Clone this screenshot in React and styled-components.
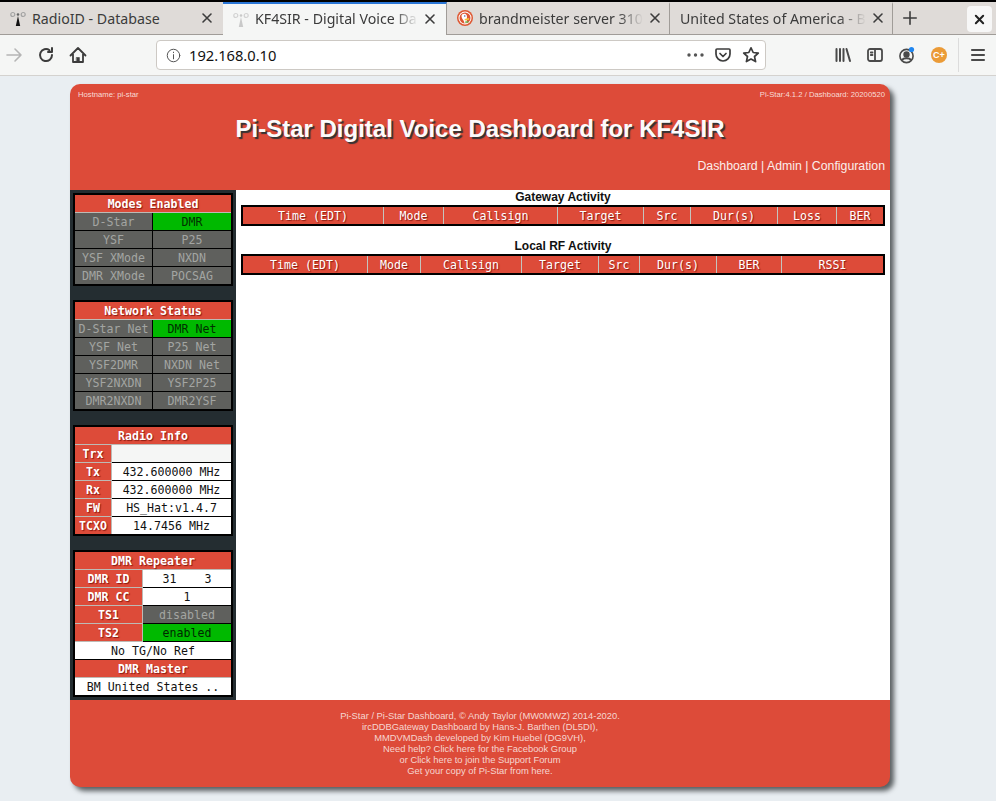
import styled, { createGlobalStyle } from 'styled-components';

const GlobalStyle = createGlobalStyle`
  html, body {
    margin: 0;
    padding: 0;
    background: #e9eef2;
    overflow: hidden;
  }
`;

const RED = '#dd4b39';
const mono = '"DejaVu Sans Mono", monospace';
const sans = '"Liberation Sans", Arial, sans-serif';
const uiFont = '"Noto Sans", "Open Sans", sans-serif';

const gatewayCols = [
  ['Time (EDT)', 141],
  ['Mode', 60],
  ['Callsign', 114],
  ['Target', 86],
  ['Src', 47],
  ['Dur(s)', 87],
  ['Loss', 59],
  ['BER', 46],
];

const localCols = [
  ['Time (EDT)', 125],
  ['Mode', 53],
  ['Callsign', 101],
  ['Target', 77],
  ['Src', 41],
  ['Dur(s)', 77],
  ['BER', 65],
  ['RSSI', 101],
];

const modes = [
  ['D-Star', 'off'],
  ['DMR', 'on'],
  ['YSF', 'off'],
  ['P25', 'off'],
  ['YSF XMode', 'off'],
  ['NXDN', 'off'],
  ['DMR XMode', 'off'],
  ['POCSAG', 'off'],
];

const network = [
  ['D-Star Net', 'off'],
  ['DMR Net', 'on'],
  ['YSF Net', 'off'],
  ['P25 Net', 'off'],
  ['YSF2DMR', 'off'],
  ['NXDN Net', 'off'],
  ['YSF2NXDN', 'off'],
  ['YSF2P25', 'off'],
  ['DMR2NXDN', 'off'],
  ['DMR2YSF', 'off'],
];

const Page = styled.div`
  width: 996px;
  height: 801px;
  overflow: hidden;
  background: #e9eef2;
  display: flex;
  flex-direction: column;
`;

const TabStrip = styled.div`
  height: 32px;
  flex-shrink: 0;
  border-top: 2px solid #000;
  background: #dfdbd8;
  border-bottom: 1px solid #a09c98;
  display: flex;
  position: relative;
  font-family: ${uiFont};
  font-size: 14.2px;
  color: #3b3b3b;
`;

const Tab = styled.div`
  width: ${({ $width }) => $width}px;
  height: ${({ $active }) => ($active ? 33 : 32)}px;
  box-sizing: border-box;
  display: flex;
  align-items: center;
  padding: 0 10px 2px 10px;
  gap: 6px;
  background: ${({ $active }) => ($active ? '#f5f6f5' : 'transparent')};
  border-top: 2px solid ${({ $active }) => ($active ? '#2a76d6' : 'transparent')};
  border-right: 1px solid #a09c98;
  margin-left: ${({ $active }) => ($active ? -1 : 0)}px;
`;

const TabTitle = styled.span`
  flex: 1;
  white-space: nowrap;
  ${({ $faded }) =>
    $faded &&
    `
    -webkit-mask-image: linear-gradient(to right, #000 85%, transparent 100%);
    mask-image: linear-gradient(to right, #000 85%, transparent 100%);
  `}
`;

const NewTab = styled.div`
  width: 34px;
  display: flex;
  align-items: center;
  justify-content: center;
`;

const WindowClose = styled.div`
  position: absolute;
  left: 967px;
  top: 4px;
  width: 25px;
  height: 26px;
  background: #f7f7f7;
  border-radius: 4px;
  display: flex;
  align-items: center;
  justify-content: center;
`;

const Toolbar = styled.div`
  height: 40px;
  flex-shrink: 0;
  background: #f5f6f5;
  border-bottom: 1px solid #d4d2cf;
  display: flex;
  align-items: center;
  position: relative;
`;

const NavIcons = styled.div`
  width: 156px;
  padding-left: 5px;
  box-sizing: border-box;
  display: flex;
  align-items: center;
  gap: 14px;
`;

const UrlBar = styled.div`
  width: 610px;
  height: 30px;
  box-sizing: border-box;
  background: #fff;
  border: 1px solid #cdc9c4;
  border-radius: 4px;
  display: flex;
  align-items: center;
  padding: 0 5px 0 9px;
  font-family: ${uiFont};
  font-size: 14.7px;
  color: #111;
  gap: 8px;
`;

const UrlText = styled.span`
  flex: 1;
`;

const UrlActions = styled.div`
  display: flex;
  align-items: center;
  gap: 10px;
`;

const RightIcons = styled.div`
  margin-left: 68px;
  display: flex;
  align-items: center;
  gap: 14px;
`;

const Separator = styled.div`
  width: 1px;
  height: 34px;
  background: #dcdcdc;
  margin: 0 -4px 0 -3px;
`;

const Orb = styled.div`
  width: 16px;
  height: 16px;
  margin-left: 1px;
  border-radius: 50%;
  background: #eb9b37;
  color: #fff;
  font-family: ${sans};
  font-weight: bold;
  font-size: 9px;
  display: flex;
  align-items: center;
  justify-content: center;
`;

const Dashboard = styled.div`
  width: 820px;
  margin: 8px 0 0 70px;
  flex-shrink: 0;
  border-radius: 10px;
  background: ${RED};
  box-shadow: 4px 4px 5px #5a5f62;
  overflow: hidden;
`;

const Header = styled.header`
  height: 106px;
  box-sizing: border-box;
  padding: 6px 5px 0 8px;
  color: #fff;
  font-family: ${sans};
  position: relative;
`;

const HeaderMeta = styled.div`
  display: flex;
  justify-content: space-between;
  font-size: 7.7px;
  line-height: 10px;
  color: #f8dcd7;
`;

const Title = styled.h1`
  margin: 15px 3px 0 0;
  font-size: 24px;
  line-height: 28px;
  font-weight: bold;
  text-align: center;
  color: #fbfbfb;
  text-shadow: 2px 2px 1px #333;
`;

const HeaderNav = styled.nav`
  margin-top: 16px;
  text-align: right;
  font-size: 12.3px;
  line-height: 14px;
  color: #fbeeeb;
`;

const Body = styled.div`
  display: flex;
  height: 510px;
  background: #fff;
`;

const Sidebar = styled.aside`
  width: 166px;
  box-sizing: border-box;
  background: #242d31;
  padding: 3px 3px 0;
  display: flex;
  flex-direction: column;
  gap: 14px;
`;

const Panel = styled.div`
  border: 2px solid #000;
  background: #000;
  font-family: ${mono};
  font-size: 11.6px;
  line-height: 19px;
  text-align: center;
  width: 160px;
  box-sizing: border-box;
`;

const PanelHead = styled.div`
  height: 18px;
  box-sizing: border-box;
  background: ${RED};
  color: #fff;
  font-weight: bold;
  text-shadow: 1px 1px 1px #8b1a10;
  border-bottom: 1px solid #bdbab5;
`;

const StatusGrid = styled.div`
  display: grid;
  grid-template-columns: 77px 78px;
  gap: 1px;
`;

const Status = styled.div`
  height: 17px;
  white-space: nowrap;
  background: ${({ $state }) => ($state === 'on' ? '#00b900' : '#5f605d')};
  color: ${({ $state }) => ($state === 'on' ? '#003200' : '#a3a5a2')};
`;

const InfoRow = styled.div`
  display: grid;
  grid-template-columns: ${({ $label }) => $label}px 1fr;
  height: 18px;
  overflow: hidden;
  &:last-child {
    height: 17px;
  }
`;

const InfoLabel = styled.div`
  height: 18px;
  box-sizing: border-box;
  background: ${RED};
  color: #fff;
  font-weight: bold;
  text-shadow: 1px 1px 1px #8b1a10;
  border-right: 1px solid #bdbab5;
  border-bottom: 1px solid #bdbab5;
  white-space: nowrap;
`;

const InfoValue = styled.div`
  background: ${({ $bg }) => $bg || '#fff'};
  color: ${({ $color }) => $color || '#111'};
  border-bottom: 1px solid #000;
  white-space: pre;
  box-sizing: border-box;
  height: 18px;
`;

const WideValue = styled.div`
  height: 18px;
  background: #fff;
  color: #111;
  border-bottom: 1px solid #000;
  box-sizing: border-box;
  white-space: nowrap;
  &:last-child {
    height: 17px;
    border-bottom: 0;
  }
`;

const Content = styled.main`
  flex: 1;
  padding: 0 5px;
`;

const SectionTitle = styled.div`
  font-family: ${sans};
  font-size: 12px;
  font-weight: bold;
  line-height: 14px;
  margin-bottom: 1px;
  text-align: center;
  color: #111;
`;

const ActivityTable = styled.div`
  border: 2px solid #000;
  display: flex;
  width: 644px;
  box-sizing: border-box;
  margin-bottom: 13px;
`;

const ActivityHead = styled.div`
  width: ${({ $width }) => $width}px;
  height: 17px;
  box-sizing: border-box;
  background: ${RED};
  color: #fff;
  font-family: ${mono};
  font-size: 11.6px;
  line-height: 19px;
  text-align: center;
  text-shadow: 1px 1px 1px #8b1a10;
  border-right: 1px solid #c4c4be;
  &:last-child {
    border-right: 0;
  }
`;

const Footer = styled.footer`
  height: 87px;
  box-sizing: border-box;
  padding-top: 10px;
  font-family: ${sans};
  font-size: 9.4px;
  line-height: 11px;
  text-align: center;
  color: #f6d6d0;
`;

const Stroke = ({ size = 18, color = '#3c3c3c', width = 2, children }) => (
  <svg
    width={size}
    height={size}
    viewBox="0 0 18 18"
    fill="none"
    stroke={color}
    strokeWidth={width}
    strokeLinecap="round"
    strokeLinejoin="round"
  >
    {children}
  </svg>
);

const CloseIcon = ({ size = 12, width = 1.6, color = '#3c3c3c' }) => (
  <svg width={size} height={size} viewBox="0 0 12 12" stroke={color} strokeWidth={width} strokeLinecap="round" style={{ flexShrink: 0 }}>
    <path d="M2 2 L10 10 M10 2 L2 10" />
  </svg>
);

const AntennaIcon = ({ faded }) => (
  <svg width="16" height="16" viewBox="0 0 16 16" fill="none" style={{ flexShrink: 0 }}>
    <g stroke={faded ? '#d2d2d2' : '#a3a3a3'} strokeWidth="1.2">
      <circle cx="2.8" cy="4.5" r="2" />
      <circle cx="13.2" cy="4.5" r="2" />
    </g>
    <circle cx="8" cy="4.5" r="1.3" fill={faded ? '#c9c9c9' : '#666'} />
    <path d="M8 6 L10.2 16 H5.8 Z" fill={faded ? '#c9c9c9' : '#111'} />
  </svg>
);

const DuckIcon = () => (
  <svg width="16" height="16" viewBox="0 0 16 16" style={{ flexShrink: 0 }}>
    <circle cx="8" cy="8" r="8" fill="#de5833" />
    <circle cx="8" cy="8" r="6.5" fill="#fff" />
    <circle cx="8" cy="8" r="5.5" fill="#de5833" />
    <path d="M4.5 6 C4.5 3.5 9 2.8 9.8 5.5 C10.3 7.5 9.5 9 10 13.5 H7.5 C7.5 10.5 4.5 9 4.5 6 Z" fill="#fff" />
    <path d="M7.5 9 L12.2 8 L12 9.8 L8 10.5 Z" fill="#f5c33b" />
    <path d="M8 11.5 L11.5 11 L11.5 12.5 L8.5 13 Z" fill="#6bb04a" />
    <circle cx="7.8" cy="6" r="0.7" fill="#2d4f8e" />
  </svg>
);

const Chrome = () => (
  <>
    <TabStrip>
      <Tab $width={224}>
        <AntennaIcon />
        <TabTitle>RadioID - Database</TabTitle>
        <CloseIcon />
      </Tab>
      <Tab $width={224} $active>
        <AntennaIcon faded />
        <TabTitle $faded>KF4SIR - Digital Voice Da</TabTitle>
        <CloseIcon />
      </Tab>
      <Tab $width={223}>
        <DuckIcon />
        <TabTitle $faded>brandmeister server 310</TabTitle>
        <CloseIcon />
      </Tab>
      <Tab $width={223}>
        <TabTitle $faded>United States of America - B</TabTitle>
        <CloseIcon />
      </Tab>
      <NewTab>
        <Stroke size={16} width={1.8}>
          <path d="M9 2 V16 M2 9 H16" />
        </Stroke>
      </NewTab>
      <WindowClose>
        <CloseIcon size={11} width={2.2} color="#222" />
      </WindowClose>
    </TabStrip>
    <Toolbar>
      <NavIcons>
        <Stroke color="#b5b5b5" size={18} width={1.6}>
          <path d="M2 9 H16 M10 3 L16 9 L10 15" />
        </Stroke>
        <Stroke size={18}>
          <path d="M15 9 A6 6 0 1 1 12.5 4.2 M15 2 V6 H11" />
        </Stroke>
        <svg width="18" height="18" viewBox="0 0 18 18" fill="none" stroke="#3c3c3c" strokeWidth="1.8" strokeLinejoin="round" strokeLinecap="round">
          <path d="M1.5 9.5 L9 2 L16.5 9.5 M4 8 V16 H14 V8" />
          <rect x="7.6" y="11.5" width="2.8" height="4.5" fill="#3c3c3c" strokeWidth="0.6" />
        </svg>
      </NavIcons>
      <UrlBar>
        <Stroke size={15} width={1.2} color="#555">
          <circle cx="9" cy="9" r="7.5" />
          <path d="M9 8 V13 M9 5 V5.6" />
        </Stroke>
        <UrlText>192.168.0.10</UrlText>
        <UrlActions>
          <svg width="17" height="4" viewBox="0 0 17 4" fill="#555">
            <circle cx="2" cy="2" r="1.7" />
            <circle cx="8.5" cy="2" r="1.7" />
            <circle cx="15" cy="2" r="1.7" />
          </svg>
          <Stroke size={18} width={1.7}>
            <path d="M3 3 H15 A1 1 0 0 1 16 4 V8 A7 7 0 0 1 2 8 V4 A1 1 0 0 1 3 3 Z M6 7.5 L9 10.5 L12 7.5" />
          </Stroke>
          <Stroke size={18} width={1.7}>
            <path d="M9 1.8 L11.2 6.5 L16.3 7.1 L12.5 10.5 L13.6 15.6 L9 13 L4.4 15.6 L5.5 10.5 L1.7 7.1 L6.8 6.5 Z" />
          </Stroke>
        </UrlActions>
      </UrlBar>
      <RightIcons>
        <Stroke size={18} width={2} color="#4a4a4a">
          <path d="M2.5 3 V15 M6 3 V15 M9.5 3 V15 M12.5 3 L16 15" />
        </Stroke>
        <Stroke size={18} width={1.8} color="#4a4a4a">
          <rect x="2" y="3" width="14" height="12" rx="2" />
          <path d="M9 3 V15 M4.8 6.5 H6.5 M4.8 9 H6.5" />
        </Stroke>
        <svg width="18" height="18" viewBox="0 0 18 18" fill="none" stroke="#4a4a4a" strokeWidth="1.6">
          <circle cx="8.5" cy="10" r="6.6" />
          <circle cx="8.5" cy="8.5" r="2.4" fill="#4a4a4a" />
          <path d="M4 14 C5.5 11.5 11.5 11.5 13 14" strokeWidth="2" />
          <circle cx="13.5" cy="3.5" r="2.6" fill="#1f86f0" stroke="none" />
        </svg>
        <Orb>C+</Orb>
        <Separator />
        <Stroke size={18} width={2.1} color="#4a4a4a">
          <path d="M3 4 H15 M3 9 H15 M3 14 H15" />
        </Stroke>
      </RightIcons>
    </Toolbar>
  </>
);

const StatusPanel = ({ title, items }) => (
  <Panel>
    <PanelHead>{title}</PanelHead>
    <StatusGrid>
      {items.map(([name, state]) => (
        <Status key={name} $state={state}>
          {name}
        </Status>
      ))}
    </StatusGrid>
  </Panel>
);

const App = () => (
  <Page>
    <GlobalStyle />
    <Chrome />
    <Dashboard>
      <Header>
        <HeaderMeta>
          <span>Hostname: pi-star</span>
          <span>Pi-Star:4.1.2 / Dashboard: 20200520</span>
        </HeaderMeta>
        <Title>Pi-Star Digital Voice Dashboard for KF4SIR</Title>
        <HeaderNav>Dashboard | Admin | Configuration</HeaderNav>
      </Header>
      <Body>
        <Sidebar>
          <StatusPanel title="Modes Enabled" items={modes} />
          <StatusPanel title="Network Status" items={network} />
          <Panel>
            <PanelHead>Radio Info</PanelHead>
            <InfoRow $label={37}>
              <InfoLabel>Trx</InfoLabel>
              <InfoValue $bg="#f5f6f5" />
            </InfoRow>
            <InfoRow $label={37}>
              <InfoLabel>Tx</InfoLabel>
              <InfoValue>432.600000 MHz</InfoValue>
            </InfoRow>
            <InfoRow $label={37}>
              <InfoLabel>Rx</InfoLabel>
              <InfoValue>432.600000 MHz</InfoValue>
            </InfoRow>
            <InfoRow $label={37}>
              <InfoLabel>FW</InfoLabel>
              <InfoValue>HS_Hat:v1.4.7</InfoValue>
            </InfoRow>
            <InfoRow $label={37}>
              <InfoLabel>TCXO</InfoLabel>
              <InfoValue>14.7456 MHz</InfoValue>
            </InfoRow>
          </Panel>
          <Panel>
            <PanelHead>DMR Repeater</PanelHead>
            <InfoRow $label={68}>
              <InfoLabel>DMR ID</InfoLabel>
              <InfoValue>31    3</InfoValue>
            </InfoRow>
            <InfoRow $label={68}>
              <InfoLabel>DMR CC</InfoLabel>
              <InfoValue>1</InfoValue>
            </InfoRow>
            <InfoRow $label={68}>
              <InfoLabel>TS1</InfoLabel>
              <InfoValue $bg="#5f605d" $color="#a3a5a2">disabled</InfoValue>
            </InfoRow>
            <InfoRow $label={68}>
              <InfoLabel>TS2</InfoLabel>
              <InfoValue $bg="#00b900" $color="#002800">enabled</InfoValue>
            </InfoRow>
            <WideValue>No TG/No Ref</WideValue>
            <PanelHead>DMR Master</PanelHead>
            <WideValue>BM United States ..</WideValue>
          </Panel>
        </Sidebar>
        <Content>
          <SectionTitle>Gateway Activity</SectionTitle>
          <ActivityTable>
            {gatewayCols.map(([name, width]) => (
              <ActivityHead key={name} $width={width}>
                {name}
              </ActivityHead>
            ))}
          </ActivityTable>
          <SectionTitle>Local RF Activity</SectionTitle>
          <ActivityTable>
            {localCols.map(([name, width]) => (
              <ActivityHead key={name} $width={width}>
                {name}
              </ActivityHead>
            ))}
          </ActivityTable>
        </Content>
      </Body>
      <Footer>
        Pi-Star / Pi-Star Dashboard, © Andy Taylor (MW0MWZ) 2014-2020.
        <br />
        ircDDBGateway Dashboard by Hans-J. Barthen (DL5DI),
        <br />
        MMDVMDash developed by Kim Huebel (DG9VH),
        <br />
        Need help? Click here for the Facebook Group
        <br />
        or Click here to join the Support Forum
        <br />
        Get your copy of Pi-Star from here.
      </Footer>
    </Dashboard>
  </Page>
);

export default App;
